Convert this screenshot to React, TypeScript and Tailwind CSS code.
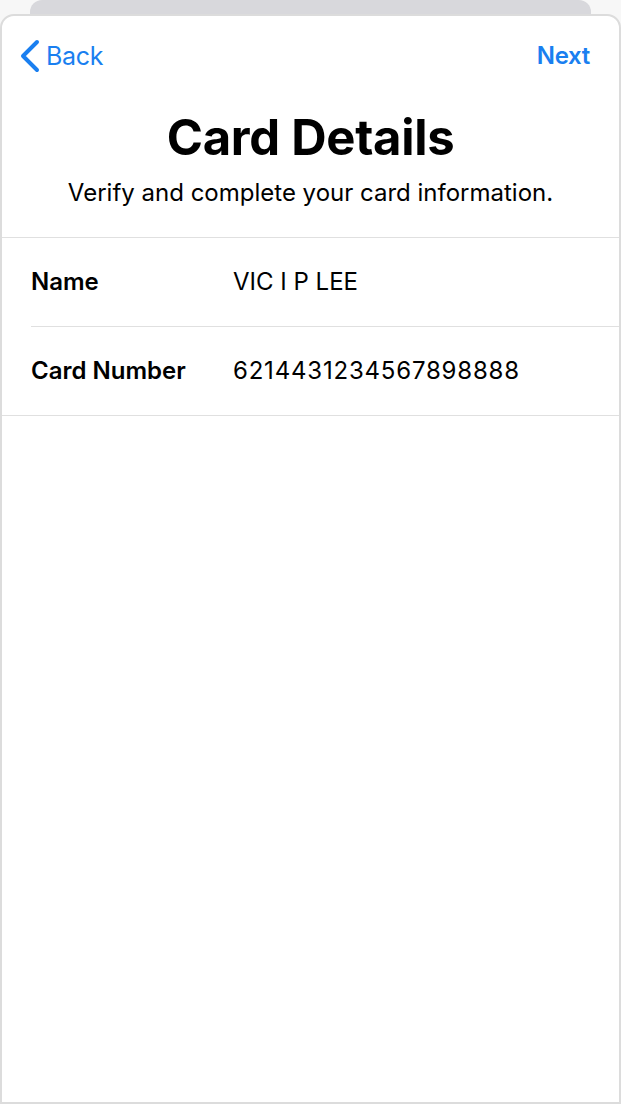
export default function App() {
  return (
    <div className="w-[621px] h-[1104px] bg-[#f7f7f7] flex flex-col overflow-hidden" style={{ fontFamily: 'Inter, "Noto Sans", sans-serif' }}>
      <div className="h-[14px] mx-[30px] shrink-0 rounded-t-[12px] bg-[#d8d8dc]" />
      <div className="flex-1 flex flex-col bg-white border-2 border-[#dcdcdc] rounded-t-[14px]">
        <div className="h-[80px] flex items-center justify-between pl-[18px] pr-[29px] shrink-0">
          <div className="flex items-center gap-[6px] text-[#1a7ff0]">
            <svg width="20" height="34" viewBox="0 0 20 34" fill="none">
              <path d="M17 3 L3 17 L17 31" stroke="#1a7ff0" strokeWidth="4" strokeLinecap="round" strokeLinejoin="round" />
            </svg>
            <span className="text-[25px] leading-none tracking-[-0.3px]">Back</span>
          </div>
          <span className="text-[24px] font-semibold leading-none text-[#1a7ff0] tracking-[-0.3px]">Next</span>
        </div>
        <div className="flex flex-col items-center shrink-0">
          <h1 className="text-[49px] font-bold leading-none text-black tracking-[-0.3px] mt-[17px]">Card Details</h1>
          <p className="text-[24px] leading-none text-black mt-[19px]">Verify and complete your card information.</p>
        </div>
        <div className="mt-[32px] border-t border-[#e0e0e0] shrink-0">
          <div className="flex items-center h-[89px] ml-[29px] border-b border-[#e0e0e0]">
            <span className="w-[202px] text-[24px] font-semibold text-black">Name</span>
            <span className="text-[24px] text-black">VIC I P LEE</span>
          </div>
          <div className="flex items-center h-[89px] pl-[29px] border-b border-[#e0e0e0]">
            <span className="w-[202px] text-[24px] font-semibold text-black">Card Number</span>
            <span className="text-[24px] text-black tracking-[0.8px]">6214431234567898888</span>
          </div>
        </div>
      </div>
    </div>
  );
}
